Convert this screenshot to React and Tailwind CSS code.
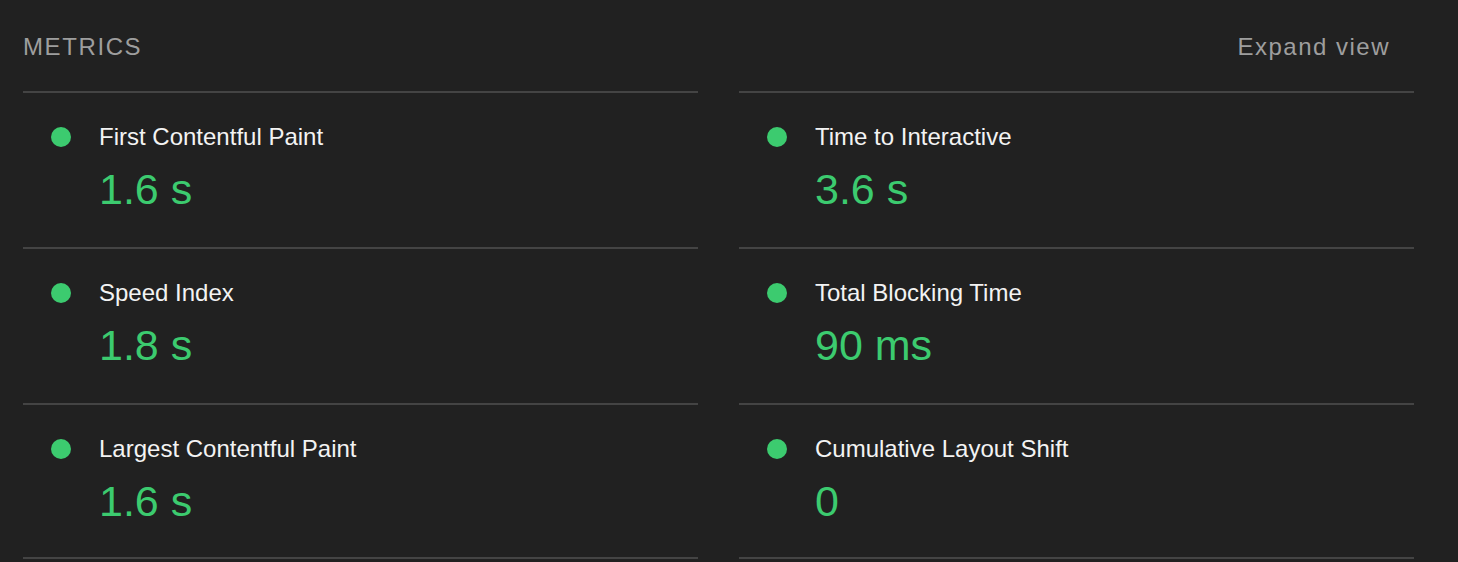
import React from "react";

const metrics = [
	{ title: "First Contentful Paint", value: "1.6 s" },
	{ title: "Time to Interactive", value: "3.6 s" },
	{ title: "Speed Index", value: "1.8 s" },
	{ title: "Total Blocking Time", value: "90 ms" },
	{ title: "Largest Contentful Paint", value: "1.6 s" },
	{ title: "Cumulative Layout Shift", value: "0" },
];

const Metric = ({ title, value, last }) => (
	<div
		className={
			last
				? "border-t-2 border-b-2 border-[#444444] pt-[30px] pb-[32px]"
				: "border-t-2 border-[#444444] pt-[30px] pb-[34px]"
		}
	>
		<div className="flex items-center">
			<span className="ml-[28px] w-5 h-5 rounded-full bg-[#3ccb6f] shrink-0" />
			<span className="ml-[28px] text-[24px] leading-[28px] text-[#f3f3f3]">
				{title}
			</span>
		</div>
		<div className="mt-[14px] pl-[76px] text-[43px] leading-[48px] text-[#3ccb6f]">
			{value}
		</div>
	</div>
);

export default function App() {
	return (
		<div
			className="h-[562px] overflow-hidden bg-[#212121] pl-[23px]"
			style={{ fontFamily: '"Liberation Sans", Arial, sans-serif' }}
		>
			<div className="w-[1391px]">
				{/* Header */}
				<div className="flex items-center justify-between pt-[33px] pb-[30px]">
					<span className="text-[24px] leading-[28px] tracking-[1.6px] text-[#9e9e9e]">
						METRICS
					</span>
					<span className="mr-[24px] text-[24px] leading-[28px] tracking-[1.5px] text-[#9e9e9e]">
						Expand view
					</span>
				</div>

				{/* Metrics grid */}
				<div className="grid grid-cols-2 gap-x-[41px]">
					{metrics.map((m, i) => (
						<Metric
							key={m.title}
							title={m.title}
							value={m.value}
							last={i >= 4}
						/>
					))}
				</div>
			</div>
		</div>
	);
}
